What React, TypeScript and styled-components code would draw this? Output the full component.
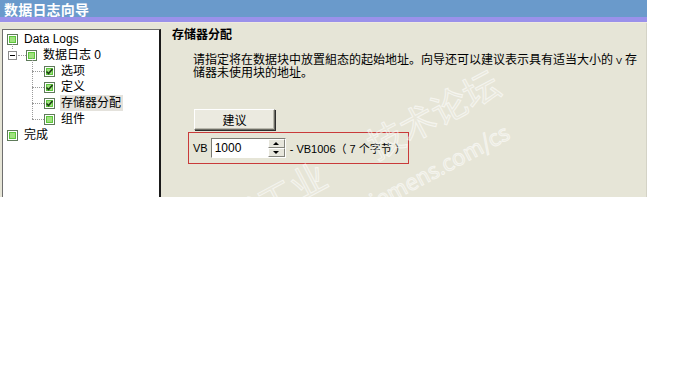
import React from "react";
import styled, { createGlobalStyle } from "styled-components";

const GlobalStyle = createGlobalStyle`
    html, body {
        margin: 0;
        padding: 0;
        background: #fff;
    }
    body {
        font-family: "Liberation Sans", "Noto Sans CJK SC", sans-serif;
        font-size: 12px;
        color: #000;
    }
`

const Page = styled.div`
    position: relative;
    width: 683px;
    height: 384px;
    overflow: hidden;
`
const Window = styled.div`
    display: flex;
    flex-direction: column;
    width: 647px;
    height: 197px;
    background: #e6e5d7;
`
const TitleBar = styled.div`
    display: flex;
    align-items: center;
    height: 16px;
    padding: 1px 0 0 4px;
    background: #6a9acb;
    color: #fff;
    font-family: "Noto Sans CJK SC", sans-serif;
    font-weight: bold;
    font-size: 14px;
    letter-spacing: 0.2px;
`
const Stripe = styled.div`
    height: 5px;
    background: #9a91ea;
    border-bottom: 1px solid #efe9e0;
`
const Body = styled.div`
    flex: 1;
    display: flex;
    padding: 6px 0 0 2px;
    border-right: 1px solid #d4d3c6;
`
const TreePane = styled.div`
    width: 156px;
    background: #fff;
    border-top: 1px solid #6f6f6f;
    border-left: 1px solid #6f6f6f;
    border-right: 2px solid #1a1a1a;
    padding-top: 1px;
`
const TreeRow = styled.div<{ $indent: number }>`
    position: relative;
    display: flex;
    align-items: center;
    height: 16px;
    padding-left: ${props => props.$indent}px;
    font-family: "Liberation Sans", "Noto Sans CJK SC", sans-serif;
    font-size: 12px;
`
const Label = styled.span<{ $selected?: boolean }>`
    margin-left: 5px;
    padding: 0 2px 0 1px;
    line-height: 16px;
    background: ${props => props.$selected ? '#e4e2dc' : 'transparent'};
`
const Expander = styled.span`
    display: inline-flex;
    align-items: center;
    justify-content: center;
    width: 7px;
    height: 7px;
    margin-right: 1px;
    border: 1px solid #8c8c8c;
    background: #fff;
    &::after {
        content: "";
        width: 5px;
        height: 1px;
        background: #000;
    }
`
const HDots = styled.span<{ $w: number }>`
    display: inline-block;
    width: ${props => props.$w}px;
    border-top: 1px dotted #9a9a9a;
`
const VDots = styled.span<{ $left: number; $top: number; $h: number }>`
    position: absolute;
    left: ${props => props.$left}px;
    top: ${props => props.$top}px;
    height: ${props => props.$h}px;
    border-left: 1px dotted #9a9a9a;
`
const Content = styled.div`
    flex: 1;
    display: flex;
    flex-direction: column;
    margin-top: -2px;
    padding-left: 11px;
`
const Heading = styled.div`
    font-family: "Noto Sans CJK SC", sans-serif;
    font-weight: bold;
    font-size: 12px;
    line-height: 14px;
    height: 14px;
`
const Desc = styled.div`
    margin: 11px 0 0 21px;
    font-family: "Noto Sans CJK SC", sans-serif;
    font-size: 12px;
`
const DescLine = styled.div`
    height: 13px;
    line-height: 13px;
    white-space: nowrap;
`
const SmallV = styled.span`
    font-family: "Liberation Sans", sans-serif;
    font-size: 9px;
    line-height: 9px;
    margin: 0 3px;
`
const SuggestButton = styled.button`
    align-self: flex-start;
    width: 81px;
    height: 21px;
    margin: 31px 0 0 22px;
    padding: 0;
    background: #ebeae0;
    border: 1px solid;
    border-color: #fff #6c6c64 #6c6c64 #fff;
    box-shadow: inset -1px -1px 0 #b9b8ad, 1px 1px 0 #2e2e2e;
    font-family: "Noto Sans CJK SC", sans-serif;
    font-size: 12px;
    color: #000;
`
const RangeBox = styled.div`
    align-self: flex-start;
    display: flex;
    align-items: center;
    width: 221px;
    height: 32px;
    box-sizing: border-box;
    margin: 2px 0 0 16px;
    padding-left: 4px;
    border: 1px solid #c93a3a;
    font-family: "Liberation Sans", "Noto Sans CJK SC", sans-serif;
    font-size: 11px;
`
const Field = styled.div`
    display: flex;
    margin-left: 3px;
    height: 18px;
    border: 1px solid;
    border-color: #7b7b73 #fff #fff #7b7b73;
    box-shadow: inset 1px 1px 0 #2a2a2a;
`
const FieldInput = styled.div`
    width: 53px;
    padding: 2px 0 0 3px;
    background: #fff;
    font-size: 12px;
    line-height: 14px;
`
const Spin = styled.div`
    display: flex;
    flex-direction: column;
    width: 17px;
    background: #fff;
`
const SpinHalf = styled.div<{ $down?: boolean }>`
    flex: 1;
    display: flex;
    align-items: center;
    justify-content: center;
    background: #e7e6dc;
    border: 1px solid;
    border-color: #fff #84847c #84847c #fff;
    &::after {
        content: "";
        border-left: 3px solid transparent;
        border-right: 3px solid transparent;
        ${props => props.$down ? 'border-top: 3px solid #000;' : 'border-bottom: 3px solid #000;'}
    }
`
const RangeText = styled.span`
    margin-left: 4px;
    font-size: 11px;
`
const Watermark = styled.div<{ $x: number; $y: number; $size: number }>`
    position: absolute;
    left: ${props => props.$x}px;
    top: ${props => props.$y}px;
    transform: rotate(-28deg);
    transform-origin: left bottom;
    white-space: nowrap;
    font-family: "Noto Sans CJK SC", "Liberation Sans", sans-serif;
    font-size: ${props => props.$size}px;
    color: rgba(255, 255, 255, 0.12);
    -webkit-text-stroke: 1px rgba(255, 255, 255, 0.6);
    pointer-events: none;
`
const WatermarkGap = styled.span`
    margin-left: 52px;
`

function Check({ checked }: { checked?: boolean }) {
    return (
        <svg width="11" height="11" viewBox="0 0 11 11">
            <rect x="0.5" y="0.5" width="10" height="10" fill="#fff" stroke="#5f7a5a" />
            <rect x="2" y="2" width="7" height="7" fill="#5dc63c" />
            <rect x="3" y="3" width="5" height="5" fill="#9fe27e" />
            {checked && <path d="M2.5 5.5 L4.5 7.5 L8.5 3" fill="none" stroke="#1b3d12" strokeWidth="1.6" />}
        </svg>
    );
}

export default function App() {
    return (
        <Page>
            <GlobalStyle />
            <Window>
                <TitleBar>数据日志向导</TitleBar>
                <Stripe />
                <Body>
                    <TreePane>
                        <TreeRow $indent={4}>
                            <Check />
                            <Label>Data Logs</Label>
                        </TreeRow>
                        <TreeRow $indent={5}>
                            <VDots $left={9} $top={-3} $h={5} />
                            <Expander />
                            <HDots $w={8} />
                            <Check />
                            <Label>数据日志 0</Label>
                        </TreeRow>
                        <TreeRow $indent={29}>
                            <VDots $left={29} $top={-5} $h={13} />
                            <HDots $w={12} />
                            <Check checked />
                            <Label>选项</Label>
                        </TreeRow>
                        <TreeRow $indent={29}>
                            <VDots $left={29} $top={-8} $h={16} />
                            <HDots $w={12} />
                            <Check checked />
                            <Label>定义</Label>
                        </TreeRow>
                        <TreeRow $indent={29}>
                            <VDots $left={29} $top={-8} $h={16} />
                            <HDots $w={12} />
                            <Check checked />
                            <Label $selected>存储器分配</Label>
                        </TreeRow>
                        <TreeRow $indent={29}>
                            <VDots $left={29} $top={-8} $h={16} />
                            <HDots $w={12} />
                            <Check />
                            <Label>组件</Label>
                        </TreeRow>
                        <TreeRow $indent={4}>
                            <Check />
                            <Label>完成</Label>
                        </TreeRow>
                    </TreePane>
                    <Content>
                        <Heading>存储器分配</Heading>
                        <Desc>
                            <DescLine>
                                请指定将在数据块中放置組态的起始地址。向导还可以建议表示具有适当大小的<SmallV>V</SmallV>存
                            </DescLine>
                            <DescLine>储器未使用块的地址。</DescLine>
                        </Desc>
                        <SuggestButton>建议</SuggestButton>
                        <RangeBox>
                            VB
                            <Field>
                                <FieldInput>1000</FieldInput>
                                <Spin>
                                    <SpinHalf />
                                    <SpinHalf $down />
                                </Spin>
                            </Field>
                            <RangeText>- VB1006（ 7 个字节 ）</RangeText>
                        </RangeBox>
                    </Content>
                </Body>
            </Window>
            <Watermark $x={176} $y={226} $size={36}>
                西门子工业<WatermarkGap>技术论坛</WatermarkGap>
            </Watermark>
            <Watermark $x={212} $y={272} $size={22}>support.industry.siemens.com/cs</Watermark>
        </Page>
    );
}
